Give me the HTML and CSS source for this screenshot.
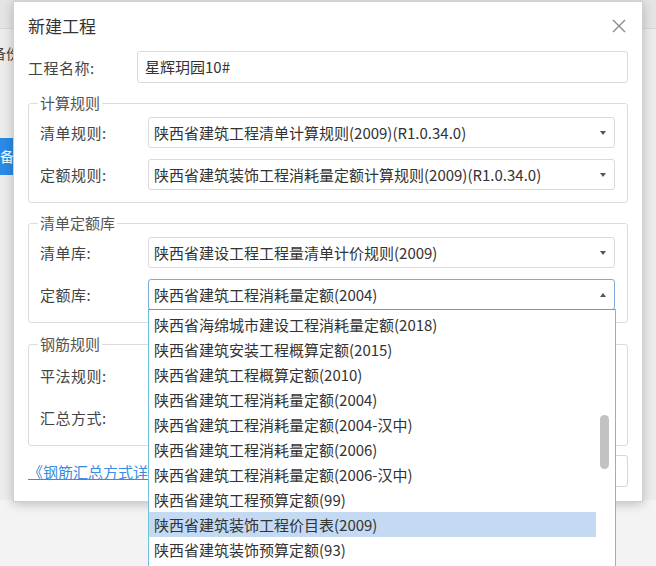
FILE: index.html
```html
<!DOCTYPE html>
<html lang="zh-CN">
<head>
  <meta charset="UTF-8">
  <title>新建工程</title>
  <link rel="stylesheet" href="styles.css">
</head>
<body>
  <div class="app">
    <div class="app-top"></div>
    <div class="app-text">备份</div>
    <div class="app-btn">备份</div>
  </div>

  <div class="dialog">
    <div class="dialog-header">
      <span class="dialog-title">新建工程</span>
      <svg class="close" width="16" height="16" viewBox="0 0 16 16">
        <path d="M2 2 L14 14 M14 2 L2 14" stroke="#8a8a8a" stroke-width="1.4" fill="none"/>
      </svg>
    </div>

    <div class="row name-row">
      <label class="label">工程名称:</label>
      <div class="input">星辉玥园10#</div>
    </div>

    <fieldset class="group">
      <legend>计算规则</legend>
      <div class="row">
        <label class="label">清单规则:</label>
        <div class="select">陕西省建筑工程清单计算规则(2009)(R1.0.34.0)<span class="caret"></span></div>
      </div>
      <div class="row">
        <label class="label">定额规则:</label>
        <div class="select">陕西省建筑装饰工程消耗量定额计算规则(2009)(R1.0.34.0)<span class="caret"></span></div>
      </div>
    </fieldset>

    <fieldset class="group">
      <legend>清单定额库</legend>
      <div class="row">
        <label class="label">清单库:</label>
        <div class="select">陕西省建设工程工程量清单计价规则(2009)<span class="caret"></span></div>
      </div>
      <div class="row">
        <label class="label">定额库:</label>
        <div class="select open">陕西省建筑工程消耗量定额(2004)<span class="caret up"></span>
          <div class="dropdown">
            <ul>
              <li>陕西省海绵城市建设工程消耗量定额(2018)</li>
              <li>陕西省建筑安装工程概算定额(2015)</li>
              <li>陕西省建筑工程概算定额(2010)</li>
              <li>陕西省建筑工程消耗量定额(2004)</li>
              <li>陕西省建筑工程消耗量定额(2004-汉中)</li>
              <li>陕西省建筑工程消耗量定额(2006)</li>
              <li>陕西省建筑工程消耗量定额(2006-汉中)</li>
              <li>陕西省建筑工程预算定额(99)</li>
              <li class="hover">陕西省建筑装饰工程价目表(2009)</li>
              <li>陕西省建筑装饰预算定额(93)</li>
              <li>陕西省市政工程消耗量定额(2004)</li>
            </ul>
            <div class="thumb"></div>
          </div>
        </div>
      </div>
    </fieldset>

    <fieldset class="group rebar">
      <legend>钢筋规则</legend>
      <div class="row">
        <label class="label">平法规则:</label>
        <div class="select"><span class="caret"></span></div>
      </div>
      <div class="row">
        <label class="label">汇总方式:</label>
        <div class="select"><span class="caret"></span></div>
      </div>
    </fieldset>

    <div class="footer">
      <a class="link" href="#">《钢筋汇总方式详</a>
      <button class="btn"></button>
    </div>
  </div>
</body>
</html>
```

FILE: styles.css
```css
* {
  box-sizing: border-box;
}

body {
  margin: 0;
  width: 656px;
  height: 566px;
  overflow: hidden;
  position: relative;
  background: #f3f3f3;
  font-family: "Noto Sans CJK SC", "Noto Sans", sans-serif;
  font-size: 15px;
  color: #333;
}

/* the window behind the dialog */
.app {
  height: 500px;
  background: #ececec;
}

.app-top {
  height: 29px;
  background: #e4e4e4;
  border-bottom: 1px solid #d6d6d6;
}

.app-text {
  margin: 14px 0 0 -8px;
  height: 20px;
  line-height: 20px;
  font-size: 14px;
  color: #444;
}

.app-btn {
  margin: 75px 0 0 -12px;
  width: 60px;
  height: 37px;
  line-height: 37px;
  padding-left: 12px;
  background: #2a8ae6;
  color: #fff;
  font-size: 14px;
}

/* dialog window */
.dialog {
  position: absolute;
  left: 13px;
  top: 1px;
  width: 630px;
  height: 501px;
  padding: 0 14px;
  background: #fff;
  border: 1px solid #d0d0d0;
  box-shadow: 0 2px 10px rgba(0, 0, 0, 0.22);
}

.dialog-header {
  height: 49px;
  display: flex;
  align-items: center;
  justify-content: space-between;
  padding-bottom: 2px;
}

.dialog-title {
  font-size: 17px;
  color: #333;
}

.close {
  margin-right: 1px;
}

.row {
  display: flex;
  align-items: center;
}

.label {
  width: 108px;
  flex: none;
  color: #444;
  letter-spacing: 0.5px;
}

.name-row .label {
  width: 109px;
}

.input,
.select {
  flex: 1;
  height: 32px;
  line-height: 30px;
  padding: 0 7px;
  border: 1px solid #dadada;
  border-radius: 3px;
  background: #fff;
  white-space: nowrap;
  color: #333;
}

.group {
  margin: 10px 0 0;
  padding: 4px 12px 12px 11px;
  border: 1px solid #dcdcdc;
  border-radius: 3px;
}

.group legend {
  padding: 0 2px;
  margin-left: -2px;
  line-height: 20px;
  color: #555;
}

.group .row + .row {
  margin-top: 11px;
}

.group .select {
  position: relative;
  height: 31px;
  line-height: 29px;
  padding: 0 5px;
}

.rebar {
  margin-top: 11px;
  padding-top: 6px;
}

.caret {
  position: absolute;
  right: 8px;
  top: 13px;
  border-left: 3px solid transparent;
  border-right: 3px solid transparent;
  border-top: 4px solid #555;
}

.caret.up {
  border-top: none;
  border-bottom: 4px solid #555;
}

.select.open {
  border-color: #7ea9d9;
}

/* open list of the 定额库 select */
.dropdown {
  position: absolute;
  left: -1px;
  right: -2px;
  top: 29px;
  height: 262px;
  background: #fff;
  border: 1px solid #6cc2d8;
  border-top-color: #5aa0dd;
  z-index: 5;
  overflow: hidden;
}

.dropdown ul {
  list-style: none;
  margin: 0;
  padding: 2px 19px 0 0;
}

.dropdown li {
  height: 25px;
  line-height: 25px;
  padding-left: 5px;
  color: #333;
  white-space: nowrap;
}

.dropdown li.hover {
  background: #c4daf2;
}

.thumb {
  position: absolute;
  right: 6px;
  top: 105px;
  width: 9px;
  height: 54px;
  border-radius: 5px;
  background: #c2c2c2;
}

.footer {
  display: flex;
  align-items: center;
  justify-content: space-between;
  margin-top: 9px;
  height: 32px;
}

.link {
  color: #3b8be0;
  font-size: 15px;
  text-decoration: underline;
}

.btn {
  height: 32px;
  width: 90px;
  margin-right: 0;
  border: 1px solid #d6d6d6;
  border-radius: 3px;
  background: #fff;
}
```
